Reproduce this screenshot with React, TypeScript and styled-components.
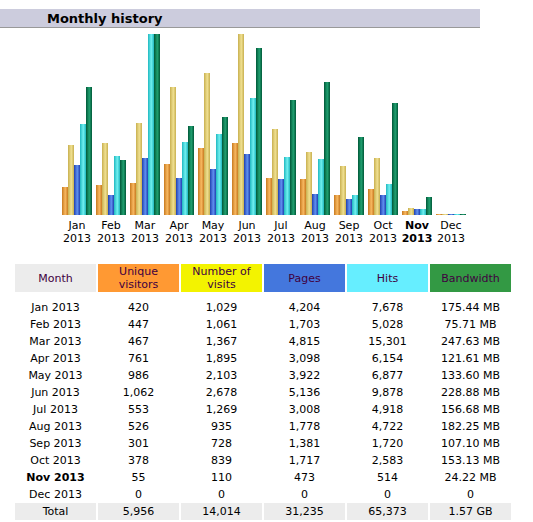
import styled, { createGlobalStyle } from "styled-components";

const GlobalStyle = createGlobalStyle`
  body {
    margin: 0;
    background: #fff;
    font-family: "DejaVu Sans", Verdana, sans-serif;
    color: #000;
  }
`;

const Page = styled.div`
  width: 533px;
  padding-top: 9px;
`;

const TitleBar = styled.div`
  width: 480px;
  height: 19px;
  background: #ccccdd;
  border-bottom: 1px solid #999;
  font-size: 13px;
  font-weight: bold;
  line-height: 19px;
  padding-left: 47px;
  box-sizing: border-box;
`;

const Chart = styled.div`
  display: flex;
  padding-left: 62px;
  margin-top: 6px;
`;

const Group = styled.div`
  width: 34px;
  display: flex;
  flex-direction: column;
  align-items: flex-start;
`;

const Bars = styled.div`
  height: 181px;
  display: flex;
  align-items: flex-end;
`;

const Bar = styled.div<{ $c1: string; $c2: string }>`
  width: 6px;
  background: linear-gradient(to right, ${(p) => p.$c1}, ${(p) => p.$c2} 55%, ${(p) => p.$c1});
`;

const Label = styled.div<{ $bold?: boolean }>`
  width: 30px;
  margin-top: 4px;
  font-size: 11px;
  line-height: 13px;
  text-align: center;
  white-space: nowrap;
  font-weight: ${(p) => (p.$bold ? "bold" : "normal")};
  display: flex;
  flex-direction: column;
  align-items: center;
`;

const Table = styled.table`
  margin: 19px 0 0 13px;
  border-spacing: 2px 0;
  font-size: 11px;
`;

const Th = styled.th<{ $bg: string }>`
  width: 81px;
  height: 28px;
  padding: 0;
  background: ${(p) => p.$bg};
  font-weight: normal;
  line-height: 13px;
  color: #400040;
`;

const Td = styled.td<{ $bold?: boolean; $total?: boolean }>`
  text-align: center;
  height: 17px;
  padding: 0;
  font-weight: ${(p) => (p.$bold ? "bold" : "normal")};
  background: ${(p) => (p.$total ? "#ececec" : "transparent")};
`;

const rows = [
  ["Jan", 420, 1029, 4204, 7678, 175.44],
  ["Feb", 447, 1061, 1703, 5028, 75.71],
  ["Mar", 467, 1367, 4815, 15301, 247.63],
  ["Apr", 761, 1895, 3098, 6154, 121.61],
  ["May", 986, 2103, 3922, 6877, 133.6],
  ["Jun", 1062, 2678, 5136, 9878, 228.88],
  ["Jul", 553, 1269, 3008, 4918, 156.68],
  ["Aug", 526, 935, 1778, 4722, 182.25],
  ["Sep", 301, 728, 1381, 1720, 107.1],
  ["Oct", 378, 839, 1717, 2583, 153.13],
  ["Nov", 55, 110, 473, 514, 24.22],
  ["Dec", 0, 0, 0, 0, 0],
] as const;

const colors: [string, string][] = [
  ["#c87a20", "#f8b860"],
  ["#c8b050", "#f0e090"],
  ["#2040b0", "#6090f0"],
  ["#20b8c0", "#70f0f0"],
  ["#005838", "#20a070"],
];

const fmt = (n: number) => n.toLocaleString("en-US");
const mb = (n: number) => (n === 0 ? "0" : `${n.toFixed(2)} MB`);

export default function App() {
  const maxV = 2678;
  const maxH = 15301;
  const maxB = 247.63;
  return (
    <Page>
      <GlobalStyle />
      <TitleBar>Monthly history</TitleBar>
      <Chart>
        {rows.map((r) => {
          const vals = [r[1] / maxV, r[2] / maxV, r[3] / maxH, r[4] / maxH, r[5] / maxB];
          return (
            <Group key={r[0]}>
              <Bars>
                {vals.map((v, i) => (
                  <Bar
                    key={i}
                    $c1={colors[i][0]}
                    $c2={colors[i][1]}
                    style={{ height: Math.max(1, Math.round(v * 181)) }}
                  />
                ))}
              </Bars>
              <Label $bold={r[0] === "Nov"}>
                <span>{r[0]}</span>
                <span>2013</span>
              </Label>
            </Group>
          );
        })}
      </Chart>
      <Table>
        <thead>
          <tr>
            <Th $bg="#ececec">Month</Th>
            <Th $bg="#ff9933">Unique<br />visitors</Th>
            <Th $bg="#f3f300">Number of<br />visits</Th>
            <Th $bg="#4477dd">Pages</Th>
            <Th $bg="#66eeff">Hits</Th>
            <Th $bg="#339944">Bandwidth</Th>
          </tr>
          <tr><td style={{ height: 7, padding: 0 }} /></tr>
        </thead>
        <tbody>
          {rows.map((r) => (
            <tr key={r[0]}>
              <Td $bold={r[0] === "Nov"}>{r[0]} 2013</Td>
              <Td>{fmt(r[1])}</Td>
              <Td>{fmt(r[2])}</Td>
              <Td>{fmt(r[3])}</Td>
              <Td>{fmt(r[4])}</Td>
              <Td>{mb(r[5])}</Td>
            </tr>
          ))}
          <tr>
            <Td $total>Total</Td>
            <Td $total>5,956</Td>
            <Td $total>14,014</Td>
            <Td $total>31,235</Td>
            <Td $total>65,373</Td>
            <Td $total>1.57 GB</Td>
          </tr>
        </tbody>
      </Table>
    </Page>
  );
}
